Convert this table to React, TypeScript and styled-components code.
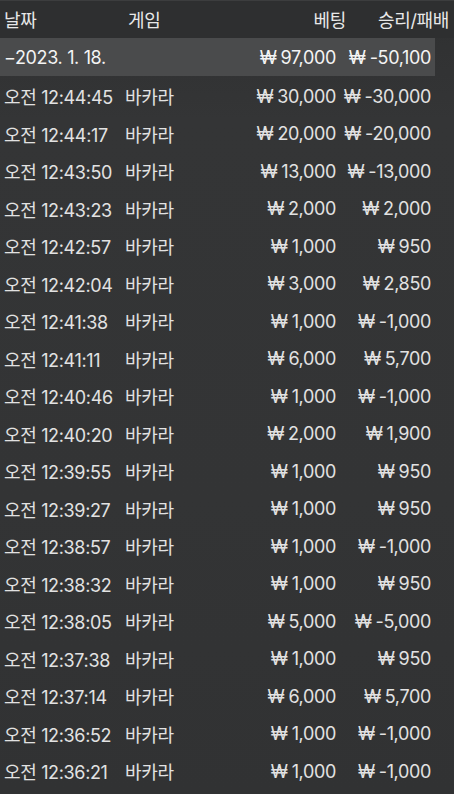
import React from "react";
import styled, { createGlobalStyle } from "styled-components";

const Global = createGlobalStyle`
  html, body { margin: 0; padding: 0; background: #333435; }
  body { font-family: Inter, "Noto Sans CJK KR", sans-serif; }
`;

const Page = styled.div`
  width: 454px;
  height: 794px;
  overflow: hidden;
  background: linear-gradient(180deg, #2f3031 0px, #343536 120px, #333435 500px, #313233 794px);
  color: #e2e2e2;
  font-size: 18px;
  letter-spacing: -0.35px;
`;

const Header = styled.div`
  display: grid;
  grid-template-columns: 124px 1fr 100px 103px;
  align-items: center;
  height: 38px;
  padding: 0 5px 0 4px;
  background: #2e2f30;
  border-top: 1px solid #3c3d3e;
  box-sizing: border-box;
  color: #e8e8e8;
`;

const HeadCell = styled.div<{ $right?: boolean }>`
  text-align: ${(p) => (p.$right ? "right" : "left")};
  padding-bottom: 2px;
`;

const Row = styled.div<{ $summary?: boolean }>`
  display: grid;
  grid-template-columns: 121px 1fr 100px 95px;
  align-items: center;
  width: 435px;
  height: ${(p) => (p.$summary ? "38px" : "37.5px")};
  padding: ${(p) => (p.$summary ? "0 4px" : "3px 4px 0")};
  box-sizing: border-box;
  background: ${(p) => (p.$summary ? "#4a4b4c" : "transparent")};
  color: ${(p) => (p.$summary ? "#f4f4f4" : "#e2e2e2")};
  white-space: nowrap;
`;

const DateCell = styled.div<{ $span?: boolean }>`
  grid-column: ${(p) => (p.$span ? "1 / 3" : "auto")};
`;

const Cell = styled.div<{ $right?: boolean }>`
  text-align: ${(p) => (p.$right ? "right" : "left")};
`;

const Won = styled.span`
  margin-right: 4px;
`;

const Money = ({ v }: { v: string }) => (
  <>
    <Won>₩</Won>
    {v}
  </>
);

const rows: [string, string, string][] = [
  ["12:44:45", "30,000", "-30,000"],
  ["12:44:17", "20,000", "-20,000"],
  ["12:43:50", "13,000", "-13,000"],
  ["12:43:23", "2,000", "2,000"],
  ["12:42:57", "1,000", "950"],
  ["12:42:04", "3,000", "2,850"],
  ["12:41:38", "1,000", "-1,000"],
  ["12:41:11", "6,000", "5,700"],
  ["12:40:46", "1,000", "-1,000"],
  ["12:40:20", "2,000", "1,900"],
  ["12:39:55", "1,000", "950"],
  ["12:39:27", "1,000", "950"],
  ["12:38:57", "1,000", "-1,000"],
  ["12:38:32", "1,000", "950"],
  ["12:38:05", "5,000", "-5,000"],
  ["12:37:38", "1,000", "950"],
  ["12:37:14", "6,000", "5,700"],
  ["12:36:52", "1,000", "-1,000"],
  ["12:36:21", "1,000", "-1,000"],
];

export default function App() {
  return (
    <Page>
      <Global />
      <Header>
        <HeadCell>날짜</HeadCell>
        <HeadCell>게임</HeadCell>
        <HeadCell $right>베팅</HeadCell>
        <HeadCell $right>승리/패배</HeadCell>
      </Header>
      <Row $summary>
        <DateCell $span>−2023. 1. 18.</DateCell>
        <Cell $right>
          <Money v="97,000" />
        </Cell>
        <Cell $right>
          <Money v="-50,100" />
        </Cell>
      </Row>
      {rows.map(([t, bet, res]) => (
        <Row key={t}>
          <DateCell>오전 {t}</DateCell>
          <Cell>바카라</Cell>
          <Cell $right>
            <Money v={bet} />
          </Cell>
          <Cell $right>
            <Money v={res} />
          </Cell>
        </Row>
      ))}
    </Page>
  );
}
